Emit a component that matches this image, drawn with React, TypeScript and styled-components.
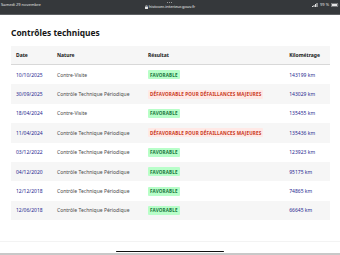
import React from 'react';
import styled, { createGlobalStyle } from 'styled-components';

const GlobalStyle = createGlobalStyle`
  html, body {
    margin: 0;
    padding: 0;
    background: #ffffff;
  }
  body {
    font-family: 'Noto Sans', 'Liberation Sans', sans-serif;
    color: #3a3a3a;
  }
`;

type Verdict = 'ok' | 'ko';

interface Control {
  date: string;
  nature: string;
  verdict: Verdict;
  km: string;
}

const controls: Control[] = [
  { date: '10/10/2025', nature: 'Contre-Visite', verdict: 'ok', km: '143199 km' },
  { date: '30/09/2025', nature: 'Contrôle Technique Périodique', verdict: 'ko', km: '143029 km' },
  { date: '18/04/2024', nature: 'Contre-Visite', verdict: 'ok', km: '135455 km' },
  { date: '11/04/2024', nature: 'Contrôle Technique Périodique', verdict: 'ko', km: '135436 km' },
  { date: '03/12/2022', nature: 'Contrôle Technique Périodique', verdict: 'ok', km: '123923 km' },
  { date: '04/12/2020', nature: 'Contrôle Technique Périodique', verdict: 'ok', km: '95175 km' },
  { date: '12/12/2018', nature: 'Contrôle Technique Périodique', verdict: 'ok', km: '74865 km' },
  { date: '12/06/2018', nature: 'Contrôle Technique Périodique', verdict: 'ok', km: '66645 km' },
];

const Screen = styled.div`
  width: 340px;
  height: 255px;
  display: flex;
  flex-direction: column;
  overflow: hidden;
`;

const StatusBar = styled.div`
  height: 14px;
  background: #35383b;
  border-bottom: 1px solid #5d6063;
  display: grid;
  grid-template-columns: 1fr auto 1fr;
  color: #e4e4e4;
  font-size: 4px;
  line-height: 1;
`;

const StatusLeft = styled.div`
  padding: 3px 0 0 1px;
`;

const StatusCenter = styled.div`
  display: flex;
  flex-direction: column;
  align-items: center;
  gap: 2px;
  padding-top: 2px;
`;

const Dots = styled.div`
  display: flex;
  gap: 1px;
`;

const Dot = styled.span`
  width: 1px;
  height: 1px;
  border-radius: 50%;
  background: #bbbbbb;
`;

const Url = styled.div`
  display: flex;
  align-items: center;
  gap: 1px;
  color: #f0f0f0;
`;

const StatusRight = styled.div`
  display: flex;
  justify-content: flex-end;
  align-items: flex-start;
  gap: 2px;
  padding: 3px 1px 0 0;
`;

const Main = styled.main`
  flex: 1;
  padding: 0 10px 0 11px;
`;

const Title = styled.h1`
  margin: 13px 0 8px;
  font-size: 8.4px;
  line-height: 10px;
  font-weight: 700;
  color: #161616;
`;

const Table = styled.table`
  width: 100%;
  border-collapse: collapse;
  font-size: 5px;
`;

const HeadCell = styled.th<{ $last?: boolean }>`
  height: 18px;
  padding: 0 ${(p) => (p.$last ? '10px' : '0')} 0 5px;
  background: #f6f6f6;
  border-bottom: 1px solid #d8d8d8;
  text-align: left;
  font-weight: 700;
  color: #161616;
`;

const Row = styled.tr<{ $striped: boolean }>`
  background: ${(p) => (p.$striped ? '#f6f6f6' : '#ffffff')};
`;

const Cell = styled.td<{ $tone?: 'blue' | 'grey' }>`
  height: 19.4px;
  padding: 0 0 0 5px;
  color: ${(p) => (p.$tone === 'blue' ? '#1f1f8f' : '#4a4a4a')};
  white-space: nowrap;
`;

const Badge = styled.span<{ $verdict: Verdict }>`
  display: inline-block;
  padding: 1.5px 2px;
  border-radius: 1px;
  font-weight: 700;
  font-size: 4.6px;
  letter-spacing: 0.15px;
  text-transform: uppercase;
  background: ${(p) => (p.$verdict === 'ok' ? '#b8fec9' : '#ffe9e6')};
  color: ${(p) => (p.$verdict === 'ok' ? '#18753c' : '#c9371b')};
`;

const Footer = styled.div`
  height: 14px;
  border-top: 1px solid #f3f3f3;
  border-bottom: 2px solid #c8c8c8;
  display: flex;
  justify-content: center;
  align-items: flex-end;
  padding-bottom: 1px;
  box-sizing: border-box;
`;

const HomeBar = styled.div`
  width: 108px;
  height: 1.5px;
  border-radius: 1px;
  background: #111111;
`;

const LockIcon = () => (
  <svg width="3" height="4" viewBox="0 0 6 8">
    <rect x="0" y="3" width="6" height="5" rx="1" fill="#e4e4e4" />
    <path d="M1.5 3V2a1.5 1.5 0 0 1 3 0v1" stroke="#e4e4e4" fill="none" />
  </svg>
);

const SignalIcon = () => (
  <svg width="6" height="4" viewBox="0 0 12 8">
    <rect x="0" y="6" width="2" height="2" fill="#e4e4e4" />
    <rect x="3" y="4" width="2" height="4" fill="#e4e4e4" />
    <rect x="6" y="2" width="2" height="6" fill="#e4e4e4" />
    <rect x="9" y="0" width="2" height="8" fill="#e4e4e4" />
  </svg>
);

const BatteryIcon = () => (
  <svg width="8" height="4" viewBox="0 0 16 8">
    <rect x="0.5" y="0.5" width="13" height="7" rx="1.5" fill="none" stroke="#e4e4e4" />
    <rect x="2" y="2" width="10" height="4" fill="#e4e4e4" />
  </svg>
);

export default function App() {
  return (
    <>
      <GlobalStyle />
      <Screen>
        <StatusBar>
          <StatusLeft>Samedi 29 novembre</StatusLeft>
          <StatusCenter>
            <Dots>
              <Dot />
              <Dot />
              <Dot />
            </Dots>
            <Url>
              <LockIcon />
              histovec.interieur.gouv.fr
            </Url>
          </StatusCenter>
          <StatusRight>
            <SignalIcon />
            <span>99 %</span>
            <BatteryIcon />
          </StatusRight>
        </StatusBar>
        <Main>
          <Title>Contrôles techniques</Title>
          <Table>
            <thead>
              <tr>
                <HeadCell style={{ width: 36 }}>Date</HeadCell>
                <HeadCell style={{ width: 86 }}>Nature</HeadCell>
                <HeadCell>Résultat</HeadCell>
                <HeadCell $last style={{ width: 30 }}>Kilométrage</HeadCell>
              </tr>
            </thead>
            <tbody>
              {controls.map((c, i) => (
                <Row key={c.date + c.km} $striped={i % 2 === 1}>
                  <Cell $tone="blue">{c.date}</Cell>
                  <Cell>{c.nature}</Cell>
                  <Cell>
                    <Badge $verdict={c.verdict}>
                      {c.verdict === 'ok' ? 'Favorable' : 'Défavorable pour défaillances majeures'}
                    </Badge>
                  </Cell>
                  <Cell $tone="blue">{c.km}</Cell>
                </Row>
              ))}
            </tbody>
          </Table>
        </Main>
        <Footer>
          <HomeBar />
        </Footer>
      </Screen>
    </>
  );
}
